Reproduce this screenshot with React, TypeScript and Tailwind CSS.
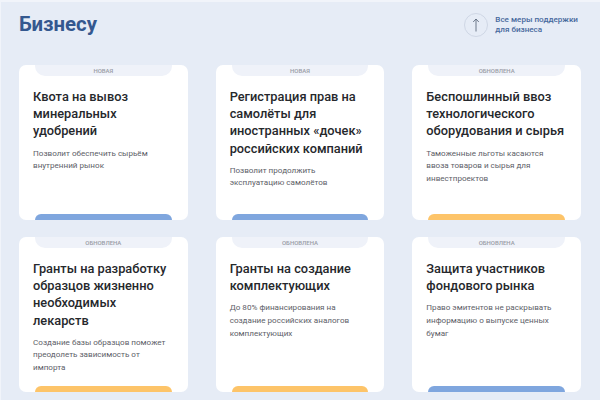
const cards = [
  { tag: "НОВАЯ", title: ["Квота на вывоз", "минеральных", "удобрений"], body: ["Позволит обеспечить сырьём", "внутренний рынок"], bar: "bg-[#7fa6de]" },
  { tag: "НОВАЯ", title: ["Регистрация прав на", "самолёты для", "иностранных «дочек»", "российских компаний"], body: ["Позволит продолжить", "эксплуатацию самолётов"], bar: "bg-[#7fa6de]" },
  { tag: "ОБНОВЛЕНА", title: ["Беспошлинный ввоз", "технологического", "оборудования и сырья"], body: ["Таможенные льготы касаются", "ввоза товаров и сырья для", "инвестпроектов"], bar: "bg-[#fdc469]" },
  { tag: "ОБНОВЛЕНА", title: ["Гранты на разработку", "образцов жизненно", "необходимых", "лекарств"], body: ["Создание базы образцов поможет", "преодолеть зависимость от", "импорта"], bar: "bg-[#fdc469]" },
  { tag: "ОБНОВЛЕНА", title: ["Гранты на создание", "комплектующих"], body: ["До 80% финансирования на", "создание российских аналогов", "комплектующих"], bar: "bg-[#fdc469]" },
  { tag: "ОБНОВЛЕНА", title: ["Защита участников", "фондового рынка"], body: ["Право эмитентов не раскрывать", "информацию о выпуске ценных", "бумаг"], bar: "bg-[#7fa6de]" },
];

function Card({ c }: { c: (typeof cards)[number] }) {
  return (
    <div className="h-[155px] bg-white rounded-[7px] flex flex-col overflow-hidden">
      <div className="mx-4 h-[11px] bg-[#eff2f9] rounded-b-[10px] flex items-center justify-center text-[6px] font-medium text-[#9a9da6] leading-none">
        {c.tag}
      </div>
      <div className="flex-1 px-[14px] pt-[12px]">
        <div className="text-[12.8px] leading-[17.2px] font-medium text-[#26282c]">
          {c.title.map((t) => <div key={t} className="whitespace-nowrap">{t}</div>)}
        </div>
        <div className="mt-[7px] text-[8.1px] leading-[12.6px] text-[#5d6068]">
          {c.body.map((t) => <div key={t} className="whitespace-nowrap">{t}</div>)}
        </div>
      </div>
      <div className={`mx-4 h-[6px] rounded-t-[6px] ${c.bar}`} />
    </div>
  );
}

export default function App() {
  return (
    <div className="w-[600px] h-[400px] overflow-hidden bg-[#e6ecf6] border-t-2 border-l border-[#f1f4fa] pl-[18px] pr-[19px] font-['Roboto',sans-serif]">
      <div className="h-[63px] flex justify-between">
        <div className="pt-[4px] text-[20.4px] leading-[36px] font-bold text-[#34588f]">Бизнесу</div>
        <div className="flex items-start pt-[11px] pr-[3px]">
          <div className="w-[24px] h-[24px] rounded-full border border-[#cfd7e5] flex items-center justify-center">
            <svg width="8" height="14" viewBox="0 0 8 14" fill="none" stroke="#5f6b7e" strokeWidth="0.9">
              <path d="M4 13.5V1M1.2 4L4 1l2.8 3" />
            </svg>
          </div>
          <div className="ml-[7px] pt-[1px] text-[8.1px] leading-[10.2px] font-medium text-[#46699d]">
            <div className="whitespace-nowrap">Все меры поддержки</div>
            <div className="whitespace-nowrap">для бизнеса</div>
          </div>
        </div>
      </div>
      <div className="grid grid-cols-3 gap-x-[28px] gap-y-[17px]">
        {cards.map((c, i) => <Card key={i} c={c} />)}
      </div>
    </div>
  );
}
